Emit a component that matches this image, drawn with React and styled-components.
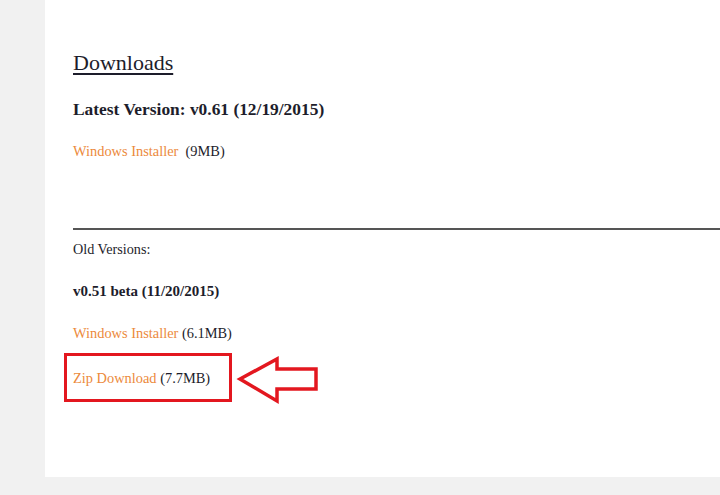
import styled, { createGlobalStyle } from "styled-components";

const GlobalStyle = createGlobalStyle`
    html, body {
        margin: 0;
        padding: 0;
        background-color: #f1f1f1;
    }
    body {
        font-family: "Liberation Serif", "Times New Roman", serif;
        color: #1d1d2b;
    }
`;

const Pagina = styled.div`
    width: 720px;
    height: 495px;
    overflow: hidden;
`;

const Painel = styled.div`
    margin-left: 45px;
    height: 477px;
    background-color: #ffffff;
    padding: 50px 0 0 28px;
    box-sizing: border-box;
`;

const Titulo = styled.h2`
    margin: 0;
    font-size: 22px;
    line-height: 26px;
    font-weight: normal;
    text-decoration: underline;
    text-underline-offset: 3px;
`;

const Versao = styled.h3`
    margin: ${(p) => p.$topo}px 0 0;
    font-size: ${(p) => p.$tamanho}px;
    line-height: 20px;
    font-weight: bold;
`;

const Linha = styled.p`
    margin: ${(p) => p.$topo}px 0 0;
    font-size: 14.4px;
    line-height: 18px;
`;

const Rotulo = styled.p`
    margin: 10px 0 0;
    font-size: 14.2px;
    line-height: 18px;
`;

const Link = styled.a`
    color: #ec8a3c;
    text-decoration: none;
    cursor: pointer;
`;

const Separador = styled.hr`
    margin: 68px 0 0;
    border: none;
    height: 2px;
    background-color: #555;
`;

const Destaque = styled.div`
    position: relative;
    display: inline-block;
    margin: 11px 0 0 -9px;
    padding: 13px 19px 12px 6px;
    border: 3px solid #e3171f;
    font-size: 14.4px;
    line-height: 18px;
`;

const Seta = styled.svg`
    position: absolute;
    left: calc(100% + 5px);
    top: -13px;
`;

export default function App() {
    return (
        <Pagina>
            <GlobalStyle />
            <Painel>
                <Titulo>Downloads</Titulo>
                <Versao $topo={23} $tamanho={17.4}>Latest Version: v0.61 (12/19/2015)</Versao>
                <Linha $topo={23}>
                    <Link>Windows Installer</Link>&nbsp; (9MB)
                </Linha>
                <Separador />
                <Rotulo>Old Versions:</Rotulo>
                <Versao $topo={23} $tamanho={15}>v0.51 beta (11/20/2015)</Versao>
                <Linha $topo={23}>
                    <Link>Windows Installer</Link> (6.1MB)
                </Linha>
                <Destaque>
                    <Link>Zip Download</Link> (7.7MB)
                    <Seta width="88" height="66" viewBox="0 0 88 66">
                        <polygon
                            points="6,36 43,16 43,26 82,26 82,46 43,46 43,58"
                            fill="#ffffff"
                            stroke="#e3171f"
                            strokeWidth="3.5"
                            strokeLinejoin="miter"
                        />
                    </Seta>
                </Destaque>
            </Painel>
        </Pagina>
    );
}
